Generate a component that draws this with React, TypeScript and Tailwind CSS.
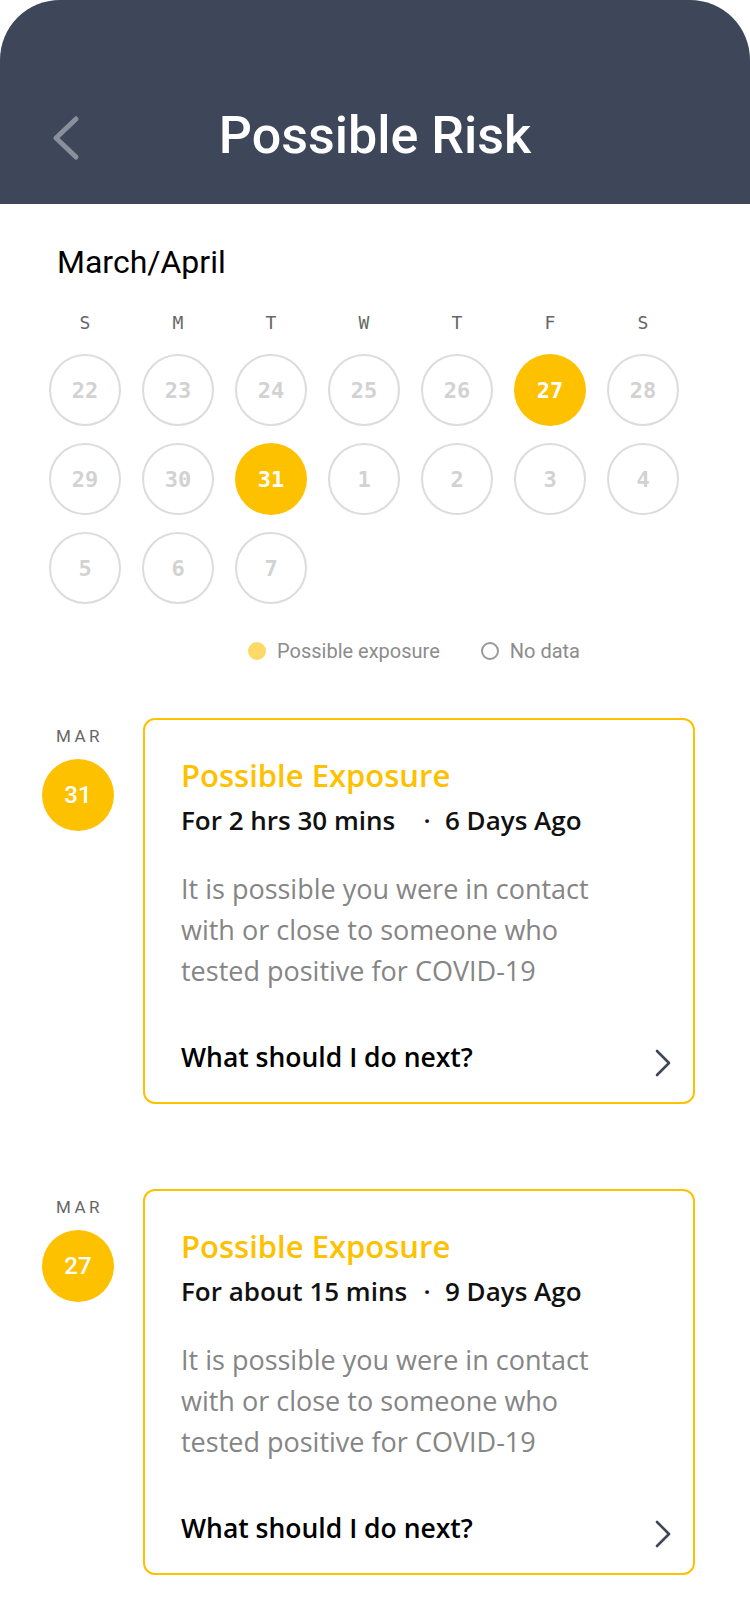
const weeks: number[][] = [
  [22, 23, 24, 25, 26, 27, 28],
  [29, 30, 31, 1, 2, 3, 4],
  [5, 6, 7],
];
const exposed = [27, 31];
const dayNames = ["S", "M", "T", "W", "T", "F", "S"];

const BackIcon = () => (
  <svg width="32" height="50" viewBox="0 0 32 50" fill="none" className="mt-[3px] ml-[50px]">
    <path d="M26 6 L6 25 L26 44" stroke="#8a909b" strokeWidth="5" strokeLinecap="round" strokeLinejoin="round" />
  </svg>
);

const ChevronRight = () => (
  <svg width="18" height="30" viewBox="0 0 18 30" fill="none">
    <path d="M3 3 L15 15 L3 27" stroke="#3d4759" strokeWidth="2.6" strokeLinecap="round" strokeLinejoin="round" />
  </svg>
);

type Exposure = { day: number; duration: string; ago: string };

const exposures: Exposure[] = [
  { day: 31, duration: "For 2 hrs 30 mins", ago: "6 Days Ago" },
  { day: 27, duration: "For about 15 mins", ago: "9 Days Ago" },
];

const ExposureRow = ({ item, first }: { item: Exposure; first: boolean }) => (
  <div className={`flex pl-[42px] ${first ? "mt-[55px]" : "mt-[85px]"}`}>
    <div className="w-[72px] flex flex-col items-center">
      <span className="mt-[8px] text-[17px] leading-[20px] tracking-[3.5px] pl-[3px] text-[#666]">MAR</span>
      <div className="mt-[13px] w-[72px] h-[72px] rounded-full bg-[#fdc100] flex items-center justify-center text-white text-[24px] font-medium">
        {item.day}
      </div>
    </div>
    <div className="ml-[29px] w-[552px] border-2 border-[#fdc100] rounded-[12px] pl-[36px] pr-[21px] pt-[37px] pb-[24px] font-['Open_Sans',sans-serif]">
      <div className="text-[31px] leading-[36px] font-semibold text-[#fdc100]">Possible Exposure</div>
      <div className="mt-[10px] flex items-center text-[26px] leading-[34px] font-semibold text-[#111]">
        <span className="w-[236px]">{item.duration}</span>
        <span className="w-[20px] text-center">·</span>
        <span className="ml-[8px]">{item.ago}</span>
      </div>
      <p className="mt-[31px] text-[27px] leading-[41px] text-[#858585] w-[450px]">
        It is possible you were in contact with or close to someone who tested positive for COVID-19
      </p>
      <div className="mt-[49px] flex justify-between items-start">
        <span className="text-[26.5px] leading-[34px] font-semibold text-black">What should I do next?</span>
        <div className="mt-[8px]">
          <ChevronRight />
        </div>
      </div>
    </div>
  </div>
);

export default function App() {
  return (
    <div className="w-[750px] h-[1624px] bg-white font-['Roboto',sans-serif] overflow-hidden">
      <div className="h-[204px] bg-[#3d4759] rounded-t-[60px] grid grid-cols-[1fr_auto_1fr] items-start pt-[110px]">
        <BackIcon />
        <h1 className="text-[52px] leading-none font-medium text-white">Possible Risk</h1>
        <div />
      </div>

      <div className="pl-[57px] mt-[42px] text-[32px] leading-none text-black">March/April</div>

      <div className="ml-[49px] mt-[35px] grid grid-cols-[repeat(7,72px)] gap-x-[21px] font-['DejaVu_Sans_Mono',monospace] text-[18px] leading-[20px] text-[#666]">
        {dayNames.map((d, i) => (
          <div key={i} className="text-center">{d}</div>
        ))}
      </div>

      <div className="ml-[49px] mt-[21px] grid grid-cols-[repeat(7,72px)] gap-x-[21px] gap-y-[17px] font-['DejaVu_Sans_Mono',monospace]">
        {weeks.flat().map((n, i) => {
          const hot = exposed.includes(n) && i < 10;
          return (
            <div
              key={i}
              className={`w-[72px] h-[72px] rounded-full flex items-center justify-center text-[22px] font-bold ${
                hot ? "bg-[#fdc100] text-white" : "border-2 border-[#dcdcdc] text-[#d2d2d2]"
              }`}
            >
              {n}
            </div>
          );
        })}
      </div>

      <div className="mt-[35px] pl-[248px] flex items-center h-[24px] text-[20px] text-[#8c8c8c]">
        <span className="w-[18px] h-[18px] rounded-full bg-[#fdd967]" />
        <span className="ml-[11px]">Possible exposure</span>
        <span className="ml-[41px] w-[18px] h-[18px] rounded-full border-2 border-[#999]" />
        <span className="ml-[11px]">No data</span>
      </div>

      {exposures.map((e, i) => (
        <ExposureRow key={e.day} item={e} first={i === 0} />
      ))}
    </div>
  );
}
